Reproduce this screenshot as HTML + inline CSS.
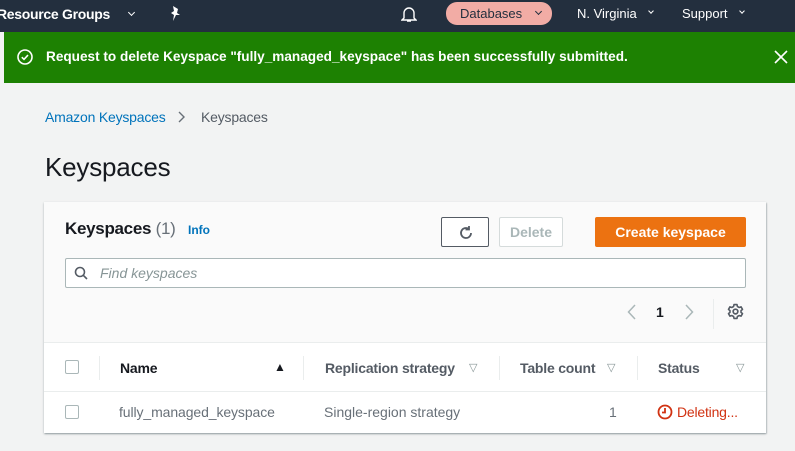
<!DOCTYPE html><html><head><style>
*{box-sizing:border-box;margin:0;padding:0}
body{width:795px;height:451px;overflow:hidden;background:#f2f3f3;font-family:"Liberation Sans",sans-serif;position:relative;font-size:14px;color:#16191f}
.a{position:absolute}
.top{left:0;top:0;width:795px;height:32px;background:#232f3e;color:#fff;font-size:14px}
.ban{left:4px;top:32px;width:791px;height:51px;background:#1d8102;color:#fff;font-weight:bold;font-size:13.6px}
.card{left:44px;top:202px;width:722px;height:231px;background:#fafafa;box-shadow:0 1px 2px rgba(0,28,36,.3),1px 1px 1px rgba(0,28,36,.15)}
.th{font-weight:bold;color:#16191f;font-size:14px;letter-spacing:-0.2px}
.cb{width:14px;height:14px;border:1px solid #aab7b8;border-radius:2px;background:#fff}
.sep{width:1px;height:24px;background:#eaeded}
.dd{position:absolute;width:5px;height:5px;border-right:1.3px solid currentColor;border-bottom:1.3px solid currentColor;transform:rotate(45deg)}
</style></head><body>
<div class="a top">
<div class="a" style="left:-3px;top:6px;font-weight:bold;letter-spacing:-0.3px">Resource Groups</div>
<div class="dd" style="left:129px;top:10px"></div>
<svg class="a" style="left:169px;top:5px" width="14" height="16" viewBox="0 0 14 16"><path d="M4 1l5 3-1 4 3 2-4 0-3 6 1-6-3-2 3-2z" fill="#fff"/></svg>
<svg class="a" style="left:401px;top:5px" width="16" height="18" viewBox="0 0 16 18"><path d="M3 13V8a5 5 0 0110 0v5l2 2H1z M6 16h4" fill="none" stroke="#fff" stroke-width="1.4"/></svg>
<div class="a" style="left:446px;top:2px;width:106px;height:23px;background:#f2aca5;border-radius:11px;color:#232f3e;font-size:13px;padding:4px 0 0 14px">Databases</div>
<div class="dd" style="left:536px;top:9px;color:#232f3e"></div>
<div class="a" style="left:577px;top:6px;font-size:13px">N. Virginia</div>
<div class="dd" style="left:649px;top:9px;width:4px;height:4px"></div>
<div class="a" style="left:682px;top:6px;font-size:13px">Support</div>
<div class="dd" style="left:740px;top:9px;width:4px;height:4px"></div>
</div>
<div class="a ban">
<svg class="a" style="left:13px;top:17px" width="16" height="16" viewBox="0 0 16 16"><circle cx="8" cy="8" r="7" fill="none" stroke="#fff" stroke-width="1.6"/><path d="M4.8 8.2l2.2 2.2 4-4.3" fill="none" stroke="#fff" stroke-width="1.6"/></svg>
<div class="a" style="left:42px;top:17px">Request to delete Keyspace "fully_managed_keyspace" has been successfully submitted.</div>
<svg class="a" style="left:770px;top:18px" width="14" height="14"><path d="M1 1l12 12M13 1L1 13" stroke="#fff" stroke-width="1.6"/></svg>
</div>
<div class="a" style="left:45px;top:109px;color:#0073bb;letter-spacing:-0.2px">Amazon Keyspaces</div>
<svg class="a" style="left:178px;top:111px" width="8" height="12"><path d="M1 1l5 5-5 5" fill="none" stroke="#687078" stroke-width="1.4"/></svg>
<div class="a" style="left:201px;top:109px;color:#545b64;letter-spacing:-0.2px">Keyspaces</div>
<div class="a" style="left:45px;top:152px;font-size:26px;color:#16191f;letter-spacing:-0.2px">Keyspaces</div>
<div class="a card">
<div class="a" style="left:21px;top:17px;font-size:17px;font-weight:bold;letter-spacing:-0.3px">Keyspaces <span style="font-weight:normal;color:#687078">(1)</span></div>
<div class="a" style="left:144px;top:21px;font-size:12px;font-weight:bold;color:#0073bb">Info</div>
<div class="a" style="left:397px;top:15px;width:48px;height:30px;border:1px solid #545b64;border-radius:2px;background:#fff"><svg class="a" style="left:15px;top:6px" width="18" height="18" viewBox="0 0 18 18"><path d="M14 9a5 5 0 11-2-4M12 2v3.5h-3.5" fill="none" stroke="#545b64" stroke-width="1.8"/></svg></div>
<div class="a" style="left:455px;top:15px;width:64px;height:30px;border:1px solid #d5dbdb;border-radius:2px;background:#fff;color:#aab7b8;font-weight:bold;text-align:center;line-height:28px">Delete</div>
<div class="a" style="left:551px;top:15px;width:151px;height:30px;background:#ec7211;border-radius:2px;color:#fff;font-weight:bold;text-align:center;line-height:30px">Create keyspace</div>
<div class="a" style="left:21px;top:56px;width:681px;height:30px;border:1px solid #aab7b8;border-radius:2px;background:#fff"><svg class="a" style="left:8px;top:7px" width="14" height="14"><circle cx="6" cy="6" r="4.5" fill="none" stroke="#545b64" stroke-width="1.6"/><path d="M9.3 9.3L13 13" stroke="#545b64" stroke-width="1.6"/></svg><div class="a" style="left:34px;top:6px;font-style:italic;color:#879596">Find keyspaces</div></div>
<svg class="a" style="left:583px;top:102px" width="9" height="16"><path d="M8 1L1.5 8 8 15" fill="none" stroke="#aab7b8" stroke-width="1.5"/></svg>
<div class="a" style="left:612px;top:102px;font-weight:bold;font-size:14px">1</div>
<svg class="a" style="left:641px;top:102px" width="9" height="16"><path d="M1 1l6.5 7L1 15" fill="none" stroke="#aab7b8" stroke-width="1.5"/></svg>
<div class="a" style="left:669px;top:97px;width:1px;height:30px;background:#eaeded"></div>
<svg class="a" style="left:683px;top:101px" width="17" height="17" viewBox="0 0 16 16"><circle cx="8" cy="8" r="2.2" fill="none" stroke="#545b64" stroke-width="1.6"/><path d="M6.6 1.5h2.8l.4 1.8 1.6.9 1.8-.6 1.4 2.4-1.4 1.2v1.6l1.4 1.2-1.4 2.4-1.8-.6-1.6.9-.4 1.8H6.6l-.4-1.8-1.6-.9-1.8.6-1.4-2.4 1.4-1.2V7.2L1.4 6l1.4-2.4 1.8.6 1.6-.9z" fill="none" stroke="#545b64" stroke-width="1.5" stroke-linejoin="round"/></svg>
<div class="a" style="left:0;top:140px;width:722px;height:91px;background:#fff;border-top:1px solid #eaeded"></div>
<div class="a" style="left:0;top:189px;width:722px;height:1px;background:#eaeded"></div>
<div class="a cb" style="left:21px;top:158px"></div>
<div class="a sep" style="left:55px;top:154px"></div>
<div class="a th" style="left:76px;top:158px">Name</div>
<div class="a" style="left:230px;top:158px;font-size:12px">▲</div>
<div class="a sep" style="left:259px;top:154px"></div>
<div class="a th" style="left:281px;top:158px;color:#545b64">Replication strategy</div>
<div class="a" style="left:425px;top:159px;font-size:11px;color:#879596">▽</div>
<div class="a sep" style="left:455px;top:154px"></div>
<div class="a th" style="left:476px;top:158px;color:#545b64">Table count</div>
<div class="a" style="left:563px;top:159px;font-size:11px;color:#879596">▽</div>
<div class="a sep" style="left:593px;top:154px"></div>
<div class="a th" style="left:614px;top:158px;color:#545b64">Status</div>
<div class="a" style="left:692px;top:159px;font-size:11px;color:#879596">▽</div>
<div class="a cb" style="left:21px;top:203px"></div>
<div class="a" style="left:75px;top:202px;color:#687078;letter-spacing:-0.1px">fully_managed_keyspace</div>
<div class="a" style="left:280px;top:202px;color:#687078">Single-region strategy</div>
<div class="a" style="left:565px;top:202px;color:#687078">1</div>
<svg class="a" style="left:613px;top:202px" width="16" height="16"><circle cx="8" cy="8" r="6.5" fill="none" stroke="#d13212" stroke-width="1.8"/><path d="M8 4v4.5H5" fill="none" stroke="#d13212" stroke-width="1.8"/></svg>
<div class="a" style="left:633px;top:202px;color:#d13212;letter-spacing:-0.2px">Deleting...</div>
</div>
</body></html>
